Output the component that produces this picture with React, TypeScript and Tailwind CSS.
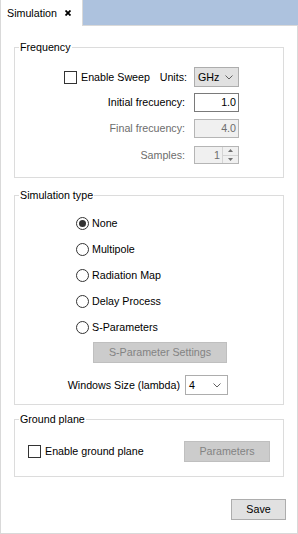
import React from "react";

const Chevron = () => (
  <svg width="8" height="5" viewBox="0 0 8 5" className="shrink-0">
    <polyline points="0.5,0.5 4,4 7.5,0.5" fill="none" stroke="#606060" strokeWidth="1" />
  </svg>
);

const Checkbox = () => (
  <div className="w-[13px] h-[13px] border border-[#333333] bg-white shrink-0" />
);

const Radio = ({ checked }: { checked?: boolean }) => (
  <div className="w-[13px] h-[13px] rounded-full border border-[#333333] bg-white shrink-0 flex items-center justify-center">
    {checked && <div className="w-[7px] h-[7px] rounded-full bg-[#333333]" />}
  </div>
);

const Group = ({ title, className, children }: { title: string; className?: string; children: React.ReactNode }) => (
  <div className={"border border-[#dcdcdc] " + (className ?? "")}>
    <div className="-mt-[8px] ml-[4px] px-[1px] bg-white w-fit h-[14px] leading-[14px]">{title}</div>
    {children}
  </div>
);

const RadioRow = ({ label, checked, first }: { label: string; checked?: boolean; first?: boolean }) => (
  <div className={"flex items-center h-[16px] pl-[61px] gap-[3px] " + (first ? "mt-[13px]" : "mt-[10px]")}>
    <Radio checked={checked} />
    <span>{label}</span>
  </div>
);

export default function App() {
  return (
    <div className="w-[298px] h-[534px] flex flex-col bg-white text-black text-[10.7px] font-['Segoe_UI','Liberation_Sans',Arial,sans-serif]">
      {/* tab strip */}
      <div className="flex h-[26px] shrink-0">
        <div className="w-[83px] border-l border-r border-[#d9d9d9] bg-white flex items-center justify-between pl-[6px] pr-[11px]">
          <span className="leading-[14px] mb-[1px]">Simulation</span>
          <svg width="6" height="6" viewBox="0 0 6 6">
            <path d="M0.5 0.5 L5.5 5.5 M5.5 0.5 L0.5 5.5" stroke="#000" strokeWidth="1.8" />
          </svg>
        </div>
        <div className="flex-1 bg-[#adc2de] border-b border-[#d9d9d9]" />
      </div>

      {/* pane */}
      <div className="flex-1 border-l border-r border-b border-[#d9d9d9] px-[13px] flex flex-col">
        <Group title="Frequency" className="mt-[21px] pb-[13px]">
          <div className="flex items-center h-[20px] mt-[13px] pl-[49px] pr-[44px]">
            <Checkbox />
            <span className="ml-[4px]">Enable Sweep</span>
            <span className="flex-1" />
            <span>Units:</span>
            <div className="ml-[7px] w-[45px] h-[20px] bg-[#e1e1e1] border border-[#adadad] flex items-center justify-between pl-[3px] pr-[5px]">
              <span>GHz</span>
              <Chevron />
            </div>
          </div>
          <div className="flex items-center justify-end gap-[9px] h-[19px] mt-[6px] pr-[44px]">
            <span>Initial frecuency:</span>
            <div className="w-[45px] h-[19px] border border-[#7a7a7a] bg-white flex items-center justify-end pr-[2px]">1.0</div>
          </div>
          <div className="flex items-center justify-end gap-[9px] h-[19px] mt-[7px] pr-[44px] text-[#6d6d6d]">
            <span>Final frecuency:</span>
            <div className="w-[45px] h-[19px] border border-[#b5b5b5] bg-[#f0f0f0] flex items-center justify-end pr-[2px]">4.0</div>
          </div>
          <div className="flex items-center justify-end gap-[9px] h-[18px] mt-[8px] pr-[44px] text-[#6d6d6d]">
            <span>Samples:</span>
            <div className="w-[45px] h-[18px] border border-[#b5b5b5] bg-[#f0f0f0] flex">
              <div className="flex-1 flex items-center justify-end pr-[2px]">1</div>
              <div className="w-[16px] flex flex-col border-l border-[#d4d4d4]">
                <div className="flex-1 flex items-center justify-center border-b border-[#d4d4d4]">
                  <svg width="5" height="3" viewBox="0 0 5 3"><polygon points="0,3 2.5,0 5,3" fill="#707070" /></svg>
                </div>
                <div className="flex-1 flex items-center justify-center">
                  <svg width="5" height="3" viewBox="0 0 5 3"><polygon points="0,0 2.5,3 5,0" fill="#707070" /></svg>
                </div>
              </div>
            </div>
          </div>
        </Group>

        <Group title="Simulation type" className="mt-[17px] pb-[9px]">
          <RadioRow label="None" checked first />
          <RadioRow label="Multipole" />
          <RadioRow label="Radiation Map" />
          <RadioRow label="Delay Process" />
          <RadioRow label="S-Parameters" />
          <div className="mt-[7px] ml-[78px] w-[134px] h-[21px] bg-[#cccccc] border border-[#bfbfbf] text-[#838383] flex items-center justify-center">
            S-Parameter Settings
          </div>
          <div className="flex items-center justify-end gap-[5px] mt-[12px] pr-[55px] h-[20px]">
            <span>Windows Size (lambda)</span>
            <div className="w-[43px] h-[20px] border border-[#adadad] bg-white flex items-center justify-between pl-[3px] pr-[6px]">
              <span>4</span>
              <Chevron />
            </div>
          </div>
        </Group>

        <Group title="Ground plane" className="mt-[14px] pb-[14px]">
          <div className="flex items-center justify-between mt-[15px] h-[21px] pl-[13px] pr-[13px]">
            <div className="flex items-center gap-[4px]">
              <Checkbox />
              <span>Enable ground plane</span>
            </div>
            <div className="w-[86px] h-[21px] bg-[#cccccc] border border-[#bfbfbf] text-[#838383] flex items-center justify-center">
              Parameters
            </div>
          </div>
        </Group>

        <div className="flex justify-end mt-[22px] -mr-[2px]">
          <div className="w-[55px] h-[21px] bg-[#e1e1e1] border border-[#adadad] flex items-center justify-center">Save</div>
        </div>
      </div>
    </div>
  );
}
